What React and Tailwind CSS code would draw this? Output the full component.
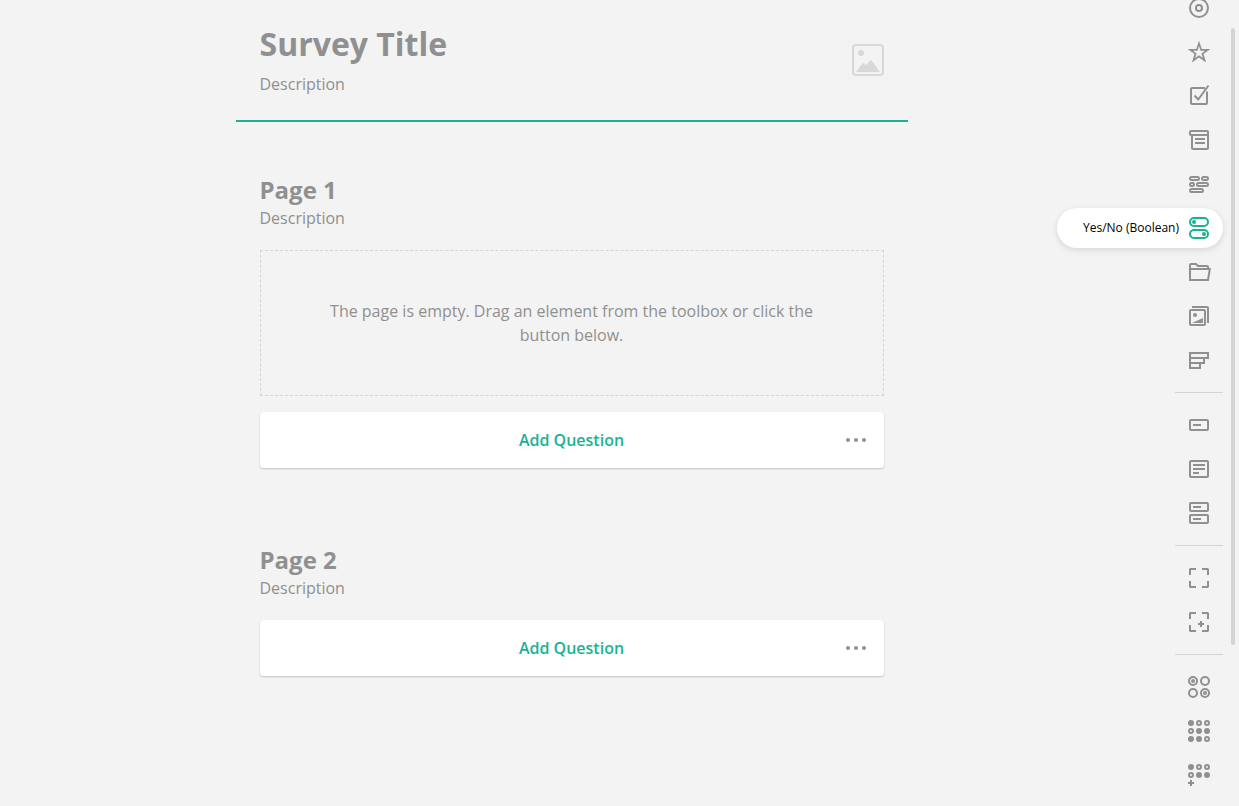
import React from "react";

function Icon({ children }) {
  return (
    <svg
      className="size-6 shrink-0"
      viewBox="0 0 24 24"
      fill="none"
      stroke="currentColor"
      strokeWidth="2"
      aria-hidden="true"
    >
      {children}
    </svg>
  );
}

function Dot({ x, y, r }) {
  return <circle cx={x} cy={y} r={r} fill="currentColor" stroke="none" />;
}

function CellGrid({ rows }) {
  return rows.map((row, j) =>
    row.split("").map((cell, i) =>
      cell === "x" ? (
        <Dot key={`${i}-${j}`} x={4 + i * 8} y={4 + j * 8} r={3} />
      ) : (
        <circle key={`${i}-${j}`} cx={4 + i * 8} cy={4 + j * 8} r="2" />
      )
    )
  );
}

const corners = "M3 9V3.500L3.500 3H9M15 3h5.500l.5.5V9M21 15v5.500l-.5.5H15M9 21H3.500l-.5-.5V15";

const groups = [
  [
    {
      label: "Radio Button Group",
      icon: (
        <>
          <circle cx="12" cy="12" r="9" />
          <circle cx="12" cy="12" r="3" />
        </>
      ),
    },
    {
      label: "Rating Scale",
      icon: (
        <path
          fill="currentColor"
          stroke="none"
          fillRule="evenodd"
          d="M12 .7L14.800 9H23.400L16.500 14.100L19.100 22.500L12 17.400L4.900 22.500L7.500 14.100L.6 9H9.200ZM12 6.100L10.500 10.700H5.900L9.600 13.500L8.200 18L12 15.300L15.800 18L14.400 13.500L18.100 10.700H13.500Z"
        />
      ),
    },
    {
      label: "Checkboxes",
      icon: (
        <>
          <path d="M18 4H5a1 1 0 0 0-1 1v14a1 1 0 0 0 1 1h14a1 1 0 0 0 1-1V7.500" />
          <path d="M7.500 11.500l3.700 4L21.500 1.500" />
        </>
      ),
    },
    {
      label: "Dropdown",
      icon: (
        <>
          <path d="M5 7H4a1 1 0 0 1-1-1V4a1 1 0 0 1 1-1h16a1 1 0 0 1 1 1v16a1 1 0 0 1-1 1H6a1 1 0 0 1-1-1V7h16" />
          <path d="M8 11h10M8 15h10" />
        </>
      ),
    },
    {
      label: "Multi-Select Dropdown",
      icon: (
        <>
          <rect x="3" y="5" width="9" height="3" rx="1.500" />
          <rect x="15" y="5" width="6" height="3" rx="1.500" />
          <rect x="3" y="11" width="4" height="3" rx="1.500" />
          <rect x="10" y="11" width="11" height="3" rx="1.500" />
          <rect x="3" y="17" width="13" height="3" rx="1.500" />
        </>
      ),
    },
    {
      label: "Yes/No (Boolean)",
      active: true,
      icon: (
        <>
          <rect x="3" y="2" width="18" height="8" rx="4" />
          <rect x="3" y="14" width="18" height="8" rx="4" />
          <Dot x={7} y={6} r={2} />
          <Dot x={17} y={18} r={2} />
        </>
      ),
    },
    {
      label: "File Upload",
      icon: (
        <path d="M3 9V5a1 1 0 0 1 1-1h5l2 2h9a1 1 0 0 1 1 1v2M3 9h19.800l-1.800 11H3Z" />
      ),
    },
    {
      label: "Image Picker",
      icon: (
        <>
          <rect x="3" y="6" width="15" height="15" rx="1" />
          <path d="M5 3h15a1 1 0 0 1 1 1v15" />
          <Dot x={8} y={11} r={2} />
          <path d="M5 19L16 14v5Z" fill="currentColor" stroke="none" />
        </>
      ),
    },
    {
      label: "Ranking",
      icon: <path d="M3 5h18v5H3ZM3 10h14v5H3ZM3 15h10v5H3Z" />,
    },
  ],
  [
    {
      label: "Single-Line Input",
      icon: (
        <>
          <rect x="3" y="7" width="18" height="10" rx="1" />
          <path d="M6 12h8" />
        </>
      ),
    },
    {
      label: "Long Text",
      icon: (
        <>
          <rect x="3" y="4" width="18" height="16" rx="1" />
          <path d="M6 8h12M6 12h12M6 16h6" />
        </>
      ),
    },
    {
      label: "Multiple Textboxes",
      icon: (
        <>
          <rect x="3" y="2" width="18" height="8" rx="1" />
          <rect x="3" y="14" width="18" height="8" rx="1" />
          <path d="M6 6h8M6 18h8" />
        </>
      ),
    },
  ],
  [
    { label: "Panel", icon: <path d={corners} /> },
    {
      label: "Dynamic Panel",
      icon: (
        <>
          <path d={corners} />
          <path d="M11 14h6M14 11v6" />
        </>
      ),
    },
  ],
  [
    {
      label: "Single-Select Matrix",
      icon: (
        <>
          <circle cx="6" cy="6" r="4" />
          <circle cx="18" cy="6" r="4" />
          <circle cx="6" cy="18" r="4" />
          <circle cx="18" cy="18" r="4" />
          <Dot x={6} y={6} r={2} />
          <Dot x={18} y={18} r={2} />
        </>
      ),
    },
    {
      label: "Multi-Select Matrix",
      icon: <CellGrid rows={["xoo", "oxx", "xxo"]} />,
    },
    {
      label: "Dynamic Matrix",
      icon: (
        <>
          <CellGrid rows={["xoo", "oxx"]} />
          <path d="M1 20h6M4 17v6" />
        </>
      ),
    },
  ],
];

function Tool({ label, icon, active }) {
  if (active) {
    return (
      <li className="relative h-10 w-12">
        <button
          type="button"
          className="absolute top-0 right-0 flex h-10 items-center gap-2 rounded-full bg-white pr-3 pl-[26px] text-xs whitespace-nowrap text-black shadow-[0_2px_6px_rgba(0,0,0,0.12)]"
        >
          {label}
          <span className="text-[#19b394]">
            <Icon>{icon}</Icon>
          </span>
        </button>
      </li>
    );
  }
  return (
    <li>
      <button
        type="button"
        aria-label={label}
        className="flex h-10 w-12 items-center justify-center"
      >
        <Icon>{icon}</Icon>
      </button>
    </li>
  );
}

function Toolbox() {
  return (
    <aside className="flex shrink-0 items-start gap-2 pr-1 pl-8">
      <nav aria-label="Toolbox" className="-mt-3 flex flex-col">
        {groups.map((tools, i) => (
          <ul
            key={i}
            className={
              i > 0
                ? "mt-3 flex flex-col gap-1 border-t border-[#d4d4d4] pt-3"
                : "flex flex-col gap-1"
            }
          >
            {tools.map((tool) => (
              <Tool key={tool.label} {...tool} />
            ))}
          </ul>
        ))}
      </nav>
      <div className="mt-7 h-[617px] w-1 rounded-full bg-[#d4d4d4]" />
    </aside>
  );
}

function AddQuestion() {
  return (
    <div className="grid h-14 grid-cols-[56px_1fr_56px] rounded bg-white shadow-[0_1px_2px_rgba(0,0,0,0.2)]">
      <button
        type="button"
        className="col-start-2 text-base font-semibold text-[#19b394]"
      >
        Add Question
      </button>
      <button
        type="button"
        aria-label="Question types"
        className="flex items-center justify-center"
      >
        <Icon>
          <Dot x={4} y={12} r={2} />
          <Dot x={12} y={12} r={2} />
          <Dot x={20} y={12} r={2} />
        </Icon>
      </button>
    </div>
  );
}

function Page({ title, empty }) {
  return (
    <section className="px-6">
      <h2 className="text-2xl leading-8 font-bold">{title}</h2>
      <p className="mb-5">Description</p>
      {empty && (
        <div className="mb-4 border border-dashed border-[#d4d4d4] px-16 py-12 text-center">
          The page is empty. Drag an element from the toolbox or click the
          button below.
        </div>
      )}
      <AddQuestion />
    </section>
  );
}

export default function App() {
  return (
    <div className="flex min-h-screen overflow-hidden bg-[#f3f3f3] font-['Open_Sans',sans-serif] text-base leading-6 text-[#909090]">
      <main className="min-w-0 flex-1">
        <div className="mx-auto w-full max-w-[672px]">
          <header className="flex items-start justify-between border-b-2 border-[#19b394] px-6 py-6">
            <div>
              <h1 className="mb-2 text-[32px] leading-10 font-bold">
                Survey Title
              </h1>
              <p>Description</p>
            </div>
            <button
              type="button"
              aria-label="Choose logo"
              className="mt-5 text-[#d8d8d8]"
            >
              <svg className="size-8" viewBox="0 0 32 32" fill="none" aria-hidden="true">
                <rect x="1" y="1" width="30" height="30" rx="3" stroke="currentColor" strokeWidth="2" />
                <circle cx="9" cy="9" r="3" fill="currentColor" />
                <path
                  d="M4 28L10.500 19.500Q11.300 18.500 12.200 19.500L14 21.300L18.200 16.500Q19 15.700 19.800 16.700L28 28Z"
                  fill="currentColor"
                />
              </svg>
            </button>
          </header>
          <div className="flex flex-col gap-[76px] pt-[52px]">
            <Page title="Page 1" empty />
            <Page title="Page 2" />
          </div>
        </div>
      </main>
      <Toolbox />
    </div>
  );
}
